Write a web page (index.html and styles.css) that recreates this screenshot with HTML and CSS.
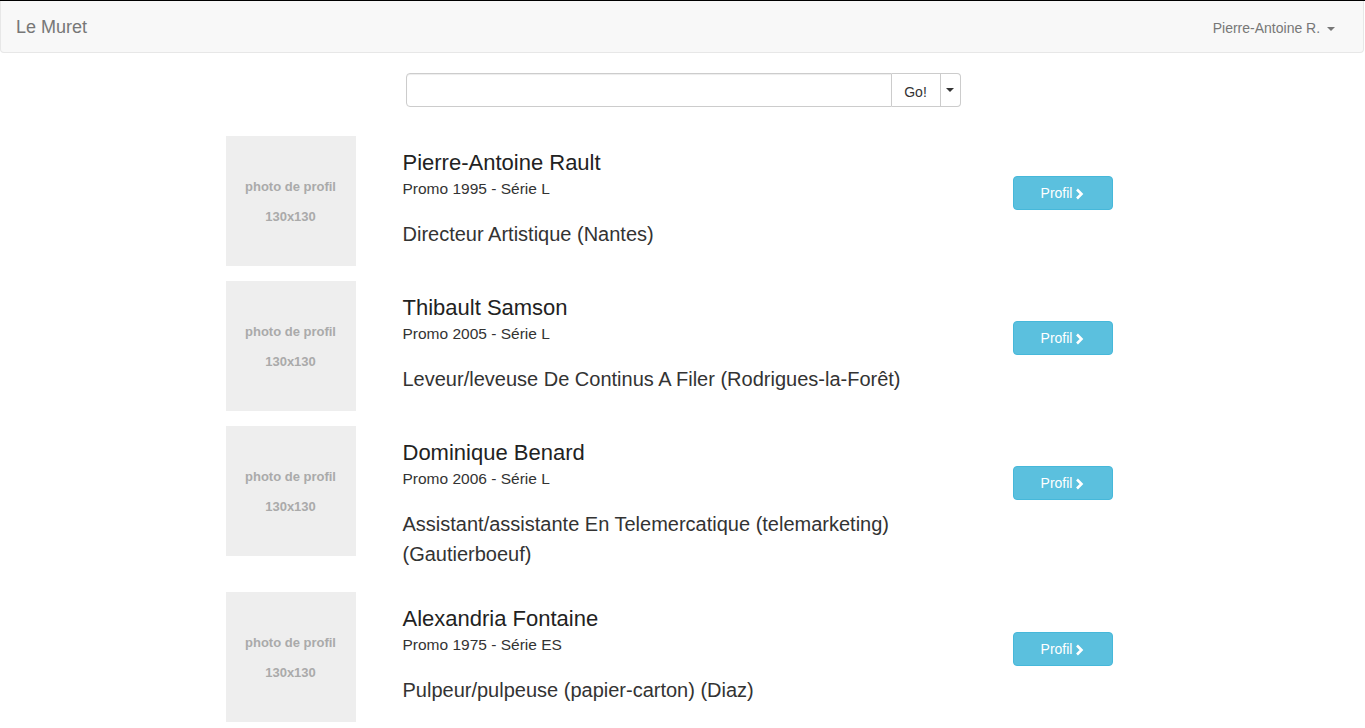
FILE: index.html
```html
<!DOCTYPE html>
<html lang="fr">
<head>
<meta charset="utf-8">
<title>Le Muret</title>
<link rel="stylesheet" href="styles.css">
</head>
<body>
<div class="topline"></div>
<nav class="navbar">
  <a class="brand" href="#">Le Muret</a>
  <a class="user" href="#">Pierre-Antoine R. <span class="caret"></span></a>
</nav>

<div class="search">
  <div class="input-group">
    <input class="search-input" type="text">
    <button class="btn-go">Go!</button>
    <button class="btn-toggle"><span class="caret dark"></span></button>
  </div>
</div>

<div class="list">
  <div class="person">
    <div class="thumb"><span>photo de profil</span><span>130x130</span></div>
    <div class="info">
      <h4 class="name">Pierre-Antoine Rault</h4>
      <div class="promo">Promo 1995 - Série L</div>
      <p class="job">Directeur Artistique (Nantes)</p>
    </div>
    <a class="btn-profil" href="#">Profil <svg class="chev" width="9" height="12" viewBox="0 0 9 12"><path d="M2 1.5 L6.5 6 L2 10.5" fill="none" stroke="#fff" stroke-width="2.6"/></svg></a>
  </div>
  <div class="person">
    <div class="thumb"><span>photo de profil</span><span>130x130</span></div>
    <div class="info">
      <h4 class="name">Thibault Samson</h4>
      <div class="promo">Promo 2005 - Série L</div>
      <p class="job">Leveur/leveuse De Continus A Filer (Rodrigues-la-Forêt)</p>
    </div>
    <a class="btn-profil" href="#">Profil <svg class="chev" width="9" height="12" viewBox="0 0 9 12"><path d="M2 1.5 L6.5 6 L2 10.5" fill="none" stroke="#fff" stroke-width="2.6"/></svg></a>
  </div>
  <div class="person">
    <div class="thumb"><span>photo de profil</span><span>130x130</span></div>
    <div class="info">
      <h4 class="name">Dominique Benard</h4>
      <div class="promo">Promo 2006 - Série L</div>
      <p class="job">Assistant/assistante En Telemercatique (telemarketing) (Gautierboeuf)</p>
    </div>
    <a class="btn-profil" href="#">Profil <svg class="chev" width="9" height="12" viewBox="0 0 9 12"><path d="M2 1.5 L6.5 6 L2 10.5" fill="none" stroke="#fff" stroke-width="2.6"/></svg></a>
  </div>
  <div class="person">
    <div class="thumb"><span>photo de profil</span><span>130x130</span></div>
    <div class="info">
      <h4 class="name">Alexandria Fontaine</h4>
      <div class="promo">Promo 1975 - Série ES</div>
      <p class="job">Pulpeur/pulpeuse (papier-carton) (Diaz)</p>
    </div>
    <a class="btn-profil" href="#">Profil <svg class="chev" width="9" height="12" viewBox="0 0 9 12"><path d="M2 1.5 L6.5 6 L2 10.5" fill="none" stroke="#fff" stroke-width="2.6"/></svg></a>
  </div>
</div>
</body>
</html>
```

FILE: styles.css
```css
* { box-sizing: border-box; }
html, body { margin: 0; padding: 0; }
body {
  font-family: "Liberation Sans", Arial, sans-serif;
  font-size: 14px;
  line-height: 1.42857;
  color: #333;
  background: #fff;
}
.topline { height: 1px; background: #000; }
.navbar {
  display: flex;
  justify-content: space-between;
  align-items: center;
  height: 52px;
  margin-right: 1px;
  background: #f8f8f8;
  border: 1px solid #e7e7e7;
  border-top: none;
  border-radius: 0 0 4px 4px;
  margin-bottom: 20px;
}
.brand {
  padding: 15px;
  font-size: 18px;
  line-height: 20px;
  color: #777;
  text-decoration: none;
}
.user {
  padding: 17px 28px 15px 15px;
  font-size: 14px;
  line-height: 20px;
  color: #777;
  text-decoration: none;
}
.caret {
  display: inline-block;
  width: 0; height: 0;
  margin-left: 3px;
  vertical-align: middle;
  border-top: 4px solid #777;
  border-left: 4px solid transparent;
  border-right: 4px solid transparent;
}
.caret.dark { border-top-color: #333; margin-left: 0; }
.search { display: flex; justify-content: center; padding-left: 1px; }
.input-group { display: flex; width: 555px; height: 34px; }
.search-input {
  flex: 1;
  height: 34px;
  border: 1px solid #ccc;
  border-radius: 4px 0 0 4px;
  box-shadow: inset 0 1px 1px rgba(0,0,0,.075);
  font: 14px "Liberation Sans", Arial, sans-serif;
  padding: 6px 12px;
  outline: none;
}
.btn-go, .btn-toggle {
  height: 34px;
  background: #fff;
  border: 1px solid #ccc;
  border-left: none;
  color: #333;
  font: 14px "Liberation Sans", Arial, sans-serif;
  padding: 6px 12px;
}
.btn-go { width: 49px; padding-top: 8px; padding-bottom: 4px; }
.btn-toggle {
  width: 20px;
  padding: 0;
  border-radius: 0 4px 4px 0;
  display: flex;
  align-items: center;
  justify-content: center;
}
.list { width: 1170px; margin: 29px auto 0; padding-left: 128px; }
.person { display: flex; align-items: flex-start; margin-bottom: 15px; }
.thumb {
  flex: none;
  width: 130px; height: 130px;
  background: #eee;
  color: #aaa;
  font-weight: bold;
  font-size: 13px;
  display: flex;
  flex-direction: column;
  align-items: center;
  justify-content: center;
  gap: 14px;
  padding-top: 2px;
}
.thumb span { line-height: 16px; }
.info { width: 610px; margin-left: 47px; padding-top: 15px; padding-bottom: 8px; }
.name { margin: 0; font-size: 22px; line-height: 24px; font-weight: 500; color: #222; }
.promo { margin-top: 4px; font-size: 15.5px; line-height: 20px; color: #333; }
.job { margin: 20px 0 0; font-size: 20px; line-height: 30px; color: #333; }
.btn-profil {
  flex: none;
  margin-top: 40px;
  width: 100px; height: 34px;
  background: #5bc0de;
  border: 1px solid #46b8da;
  border-radius: 4px;
  color: #fff;
  text-decoration: none;
  font-size: 14px;
  display: flex;
  align-items: center;
  justify-content: center;
  gap: 3px;
  padding-top: 2px;
}
.chev { display: block; }
```
